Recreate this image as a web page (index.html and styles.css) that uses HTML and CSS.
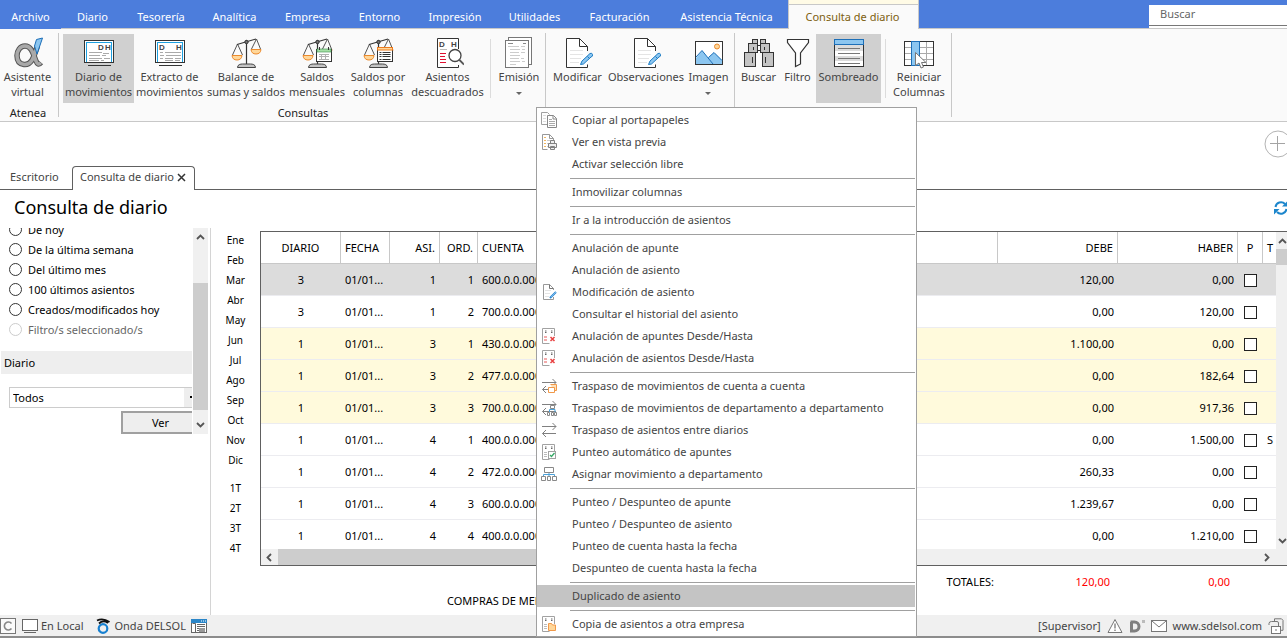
FILE: index.html
```html
<!DOCTYPE html>
<html lang="es">
<head>
<meta charset="utf-8">
<meta name="viewport" content="width=device-width, initial-scale=1">
<title>Consulta de diario</title>
<link rel="stylesheet" href="styles.css">
</head>
<body>
<svg class="sprite" aria-hidden="true">
  <symbol id="i-scale" viewBox="0 0 32 32">
    <g fill="none" stroke="#555" stroke-width="1">
      <path d="M7.5 7 2.500 18M7.500 7l5 11M26.500 2l-5 10M26.500 2l4 10"/>
    </g>
    <path d="M7 7.500 26 2" stroke="#333" stroke-width="1.200" fill="none"/>
    <path d="M16.500 3v24" stroke="#333" stroke-width="1.200"/>
    <circle cx="16.500" cy="5" r="1.700" fill="#777" stroke="#333"/>
    <path d="M2 18.500h10q-.5 4.500-5 4.500t-5-4.500z" fill="#ffd79a" stroke="#ec8a2c"/>
    <path d="M21 12.500h10q-.5 4.500-5 4.500t-5-4.500z" fill="#ffd79a" stroke="#ec8a2c"/>
    <path d="M7.500 30.500c0-3 3-3.500 5-3.500h8c2 0 5 .5 5 3.500z" fill="#c4c4c4" stroke="#444"/>
  </symbol>
  <symbol id="i-page" viewBox="0 0 32 32">
    <path d="M4.500 1.500h14l7 7V30.500h-21z" fill="#fff" stroke="none"/>
    <path d="M25.500 14V9.500l-8-8h-13v29h21v-3" fill="none" stroke="#333"/>
    <path d="M17.500 1.500v8h8" fill="none" stroke="#333"/>
    <path d="M8 13.500h13M8 17.500h13M8 21.500h11M8 25.500h9" stroke="#e4e4e4"/>
    <path d="M18.500 27.500l1.500-3.500 8-7.500q2-1 2.500 1t-1.500 2.500l-7.500 7z" fill="#8cc6f0" stroke="#1c7cc4"/>
    <path d="M25.500 19.500l2 2" stroke="#1c7cc4"/>
  </symbol>
  <symbol id="m-sheet" viewBox="0 0 16 16">
    <path d="M13.500 8V.5h-12v15h7" fill="#fff" stroke="#a2a2a2"/>
    <path d="M4 3h1.500M4 4.500h1.500M10 3h1.500M10 4.500h1.500" stroke="#666"/>
  </symbol>
  <symbol id="m-swap" viewBox="0 0 16 16">
    <path d="M1 4.500h14M11.500 1l3.500 3.500-3.500 3.500M15 11.500H1.500M5 8l-3.500 3.500L5 15" fill="none" stroke="#808080"/>
  </symbol>
</svg>

<header>
  <nav class="topbar" aria-label="Menú principal">
    <div class="tabs">
      <a class="tab tab-file" href="#">Archivo</a>
      <a class="tab" href="#">Diario</a>
      <a class="tab" href="#">Tesorería</a>
      <a class="tab" href="#">Analítica</a>
      <a class="tab" href="#">Empresa</a>
      <a class="tab" href="#">Entorno</a>
      <a class="tab" href="#">Impresión</a>
      <a class="tab" href="#">Utilidades</a>
      <a class="tab" href="#">Facturación</a>
      <a class="tab" href="#">Asistencia Técnica</a>
      <a class="tab tab-active" href="#" aria-current="page">Consulta de diario</a>
    </div>
    <div class="search"><input type="text" placeholder="Buscar" aria-label="Buscar"></div>
  </nav>

  <div class="ribbon">
    <section class="group g-atenea">
      <div class="tools">
        <button class="tool w58" type="button">
          <svg class="ico" viewBox="0 0 32 32"><path d="M25.500 9C22 19 20 28.500 12 27.500c-5-.6-7-4.500-7-9s3-9.500 8-9.500c7 0 8.500 9 11 15 1 3 3 4 5 1.500" fill="none" stroke="#555" stroke-width="5.500"/><path d="M25.500 9C22 19 20 28.500 12 27.500c-5-.6-7-4.500-7-9s3-9.500 8-9.500c7 0 8.500 9 11 15 1 3 3 4 4.600 1.800" fill="none" stroke="#a9a9a9" stroke-width="3.500"/><path d="M24.500 2.500 30.500 1l-5.500 16-2.500-8z" fill="#8cc6f0" stroke="#1d6fb8"/></svg>
          <span>Asistente<br>virtual</span>
        </button>
      </div>
      <h2>Atenea</h2>
    </section>

    <section class="group g-consultas">
      <div class="tools">
        <button class="tool w71 is-on" type="button">
          <svg class="ico" viewBox="0 0 32 32" shape-rendering="crispEdges"><rect x="1.500" y="3.500" width="29" height="22" fill="#fff" stroke="#333"/><path d="M3.500 25V5.500h25V25" fill="none" stroke="#1ea0e0"/><path d="M5 28.500h23" stroke="#333"/><path d="M6 15.500h13M6 18.500h11M6 21.500h13M6 23.500h10M20 16.500h6M19 18.500h4M21 21.500h6M18 23.500h3" stroke="#aaa"/><text class="icon-text" x="15" y="13">D</text><text class="icon-text" x="22" y="13">H</text></svg>
          <span>Diario de<br>movimientos</span>
        </button>
        <button class="tool w71" type="button">
          <svg class="ico" viewBox="0 0 32 32" shape-rendering="crispEdges"><rect x="1.500" y="3.500" width="29" height="22" fill="#fff" stroke="#333"/><path d="M3.500 25V5.500h25V25" fill="none" stroke="#1ea0e0"/><path d="M5 28.500h23" stroke="#333"/><path d="M6 15.500h3M11 15.500h16M6 18.500h4M12 18.500h15M6 21.500h3M11 21.500h8M21 21.500h6M11 23.500h8M21 23.500h5" stroke="#aaa"/><text class="icon-text" x="5" y="13">D</text><text class="icon-text" x="22" y="13">H</text></svg>
          <span>Extracto de<br>movimientos</span>
        </button>
        <button class="tool w82" type="button">
          <svg class="ico"><use href="#i-scale"/></svg>
          <span>Balance de<br>sumas y saldos</span>
        </button>
        <button class="tool w60" type="button">
          <svg class="ico" viewBox="0 0 32 32"><use href="#i-scale" width="32" height="32"/><rect x="15.500" y="12.500" width="15" height="12" fill="#fff" stroke="#333"/><rect x="16" y="12" width="14" height="3" fill="#a5e0a5" stroke="#3a8a4a" stroke-width=".6"/><path d="M18.500 10v3M27.500 10v3" stroke="#333"/><path d="M18 17.500h10M18 19.500h10M18 22.500h10M20.500 17v6M24.500 17v6" stroke="#b0b0b0"/></svg>
          <span>Saldos<br>mensuales</span>
        </button>
        <button class="tool w62" type="button">
          <svg class="ico" viewBox="0 0 32 32"><use href="#i-scale" width="32" height="32"/><rect x="15.500" y="10.500" width="15" height="14" fill="#fff" stroke="#333"/><rect x="15.500" y="10.500" width="15" height="2.500" fill="#ffd79a" stroke="#ec7a1c"/><path d="M17.500 15.500h2M20.500 15.500h8M17.500 17.500h2M20.500 17.500h8M17.500 19.500h2M20.500 19.500h8M17.500 22.500h2M20.500 22.500h8" stroke="#333"/></svg>
          <span>Saldos por<br>columnas</span>
        </button>
        <button class="tool w77" type="button">
          <svg class="ico" viewBox="0 0 32 32"><path d="M26.500 12V1.500h-21v29h21V28" fill="#fff" stroke="#333"/><text class="icon-text" x="7" y="10">D</text><text class="icon-text" x="19" y="10">H</text><path d="M8 12.500h7" stroke="#bbb"/><path d="M8 16.500h6M8 19.500h5M8 22.500h6M8 25.500h6" stroke="#e01030"/><circle cx="23" cy="18.500" r="6" fill="#fff" stroke="#444" stroke-width="1.300"/><path d="M27 22.500l5 5" stroke="#555" stroke-width="1.800"/></svg>
          <span>Asientos<br>descuadrados</span>
        </button>
        <div class="tool-sep"></div>
        <button class="tool w48" type="button">
          <svg class="ico" viewBox="0 0 32 32" shape-rendering="crispEdges"><path d="M5.500 3V.5h23v27H26" fill="#fff" stroke="#777"/><rect x="2.500" y="3.500" width="23" height="27" fill="#fff" stroke="#777"/><path d="M5 6.500h5M20 6.500h3" stroke="#888"/><path d="M5 9.500h11M18 9.500h4M7 12.500h10M19 12.500h3M7 15.500h9M18 15.500h4M7 18.500h10M7 21.500h9M18 21.500h3M7 24.500h10M19 24.500h3M7 27.500h6" stroke="#ccc"/></svg>
          <span>Emisión<br><i class="caret"></i></span>
        </button>
      </div>
      <h2>Consultas</h2>
    </section>

    <section class="group g-edit">
      <div class="tools">
        <button class="tool w57" type="button"><svg class="ico"><use href="#i-page"/></svg><span>Modificar</span></button>
        <button class="tool w80" type="button"><svg class="ico"><use href="#i-page"/></svg><span>Observaciones</span></button>
        <button class="tool w45" type="button">
          <svg class="ico" viewBox="0 0 32 32"><rect x="2.500" y="4.500" width="27" height="23" fill="#fff" stroke="#333"/><path d="M3 21l6-7.500 11 13.500H3zM15 20.500l6-5 8 7.500v4H20z" fill="#8cc6f0"/><path d="M3 20l6-6.500L20 27M15.500 20.500l5.500-5 8 8" fill="none" stroke="#1d6fb8"/><circle cx="24" cy="9.500" r="2.500" fill="#ffd79a" stroke="#ec8a2c"/></svg>
          <span>Imagen<br><i class="caret"></i></span>
        </button>
      </div>
    </section>

    <section class="group g-view">
      <div class="tools">
        <button class="tool w41" type="button">
          <svg class="ico" viewBox="0 0 32 32" shape-rendering="crispEdges"><g fill="#c4c4c4" stroke="#333"><rect x="9.500" y="2.500" width="5" height="4"/><rect x="17.500" y="2.500" width="5" height="4"/><rect x="13.500" y="8.500" width="5" height="5" fill="#fff"/><rect x="5.500" y="6.500" width="9" height="9"/><rect x="17.500" y="6.500" width="9" height="9"/><rect x="1.500" y="15.500" width="11" height="14"/><rect x="19.500" y="15.500" width="11" height="14"/><path d="M10.500 10v3M21.500 10v3M9.500 20v6M22.500 20v6"/></g></svg>
          <span>Buscar</span>
        </button>
        <button class="tool w37" type="button">
          <svg class="ico" viewBox="0 0 32 32"><path d="M5.500 2.500h21v3l-8 10.500v11l-5 2.500V16l-8-10.500z" fill="#fff" stroke="#333" stroke-width="1.200"/></svg>
          <span>Filtro</span>
        </button>
        <button class="tool w65 is-on" type="button">
          <svg class="ico" viewBox="0 0 32 32" shape-rendering="crispEdges"><rect x="1.500" y="2.500" width="29" height="27" fill="#fff" stroke="#333"/><path d="M2 8h28v6H2zM2 19h28v5H2z" fill="#dcdcdc"/><rect x="1.500" y="2.500" width="29" height="5" fill="#8cc6f0" stroke="#1d6fb8"/><path d="M5 11.500h22M5 16.500h22M5 21.500h22M5 26.500h22" stroke="#777"/></svg>
          <span>Sombreado</span>
        </button>
        <div class="tool-sep"></div>
        <button class="tool w58" type="button">
          <svg class="ico" viewBox="0 0 32 32"><g shape-rendering="crispEdges"><rect x="1.500" y="4.500" width="29" height="24" fill="#fff" stroke="#333"/><path d="M2 10.500h28M2 16.500h28M2 22.500h28M23.500 5v23" stroke="#aaa"/><rect x="8.500" y="4.500" width="8" height="24" fill="#8cc6f0" stroke="#1d6fb8"/></g><path d="M12.500 15.500v13l3.500-2.500 2 5 2.500-1-2-4.500h4.500z" fill="#fff" stroke="#777"/></svg>
          <span>Reiniciar<br>Columnas</span>
        </button>
      </div>
    </section>
  </div>
</header>

<div class="doc-tools">
  <button class="add" type="button" aria-label="Añadir"><svg viewBox="0 0 28 28"><circle cx="14" cy="14" r="13" fill="none" stroke="#b4b4b4"/><path d="M6 13.500h15M13.500 6v15" stroke="#a4a4a4"/></svg></button>
</div>

<nav class="doc-tabs" aria-label="Documentos">
  <a class="doc-tab" href="#">Escritorio</a>
  <div class="doc-tab doc-tab-active"><a href="#">Consulta de diario</a><button type="button" aria-label="Cerrar"><svg viewBox="0 0 9 9"><path d="M1 1l7 7M8 1L1 8" stroke="#333" stroke-width="1.500"/></svg></button></div>
  <div class="doc-line"></div>
</nav>

<div class="heading">
  <h1>Consulta de diario</h1>
  <button class="refresh" type="button" aria-label="Actualizar"><svg viewBox="0 0 14 14"><path d="M1.500 6A5.500 5.500 0 0 1 11 3M12.500 8A5.500 5.500 0 0 1 3 11" fill="none" stroke="#1c86cc" stroke-width="2"/><path d="M13 .5v5H8zM0 13.500v-5.500h5.500z" fill="#1c86cc"/></svg></button>
</div>

<main>
  <aside class="side">
    <form class="filter">
      <div class="filter-body">
        <label class="opt"><input type="radio" name="periodo">De hoy</label>
        <label class="opt"><input type="radio" name="periodo">De la última semana</label>
        <label class="opt"><input type="radio" name="periodo">Del último mes</label>
        <label class="opt"><input type="radio" name="periodo">100 últimos asientos</label>
        <label class="opt"><input type="radio" name="periodo">Creados/modificados hoy</label>
        <label class="opt opt-off"><input type="radio" name="periodo" disabled>Filtro/s seleccionado/s</label>
        <label class="section" for="diario">Diario</label>
        <div class="combo"><select id="diario"><option>Todos</option></select><span class="combo-arrow"></span></div>
        <button class="see" type="button">Ver</button>
      </div>
      <div class="vbar">
        <svg viewBox="0 0 9 6"><path d="M1 5l3.500-3.500L8 5" fill="none" stroke="#555" stroke-width="1.800"/></svg>
        <div class="vthumb"></div>
        <svg viewBox="0 0 9 6"><path d="M1 1l3.500 3.500L8 1" fill="none" stroke="#555" stroke-width="1.800"/></svg>
      </div>
    </form>
  </aside>

  <div class="months">
    <button type="button">Ene</button><button type="button">Feb</button><button type="button">Mar</button><button type="button">Abr</button><button type="button">May</button><button type="button">Jun</button><button type="button">Jul</button><button type="button">Ago</button><button type="button">Sep</button><button type="button">Oct</button><button type="button">Nov</button><button type="button">Dic</button>
    <button class="first-term" type="button">1T</button><button type="button">2T</button><button type="button">3T</button><button type="button">4T</button>
  </div>

  <section class="journal">
    <div class="grid">
      <div class="grid-view">
        <table>
          <colgroup><col class="c-diario"><col class="c-fecha"><col class="c-asi"><col class="c-ord"><col><col class="c-importe"><col class="c-importe"><col class="c-p"><col class="c-t"></colgroup>
          <thead><tr><th class="mid">DIARIO</th><th>FECHA</th><th class="num">ASI.</th><th class="num">ORD.</th><th>CUENTA</th><th class="num">DEBE</th><th class="num">HABER</th><th class="mid">P</th><th class="last">T</th></tr></thead>
          <tbody>
            <tr class="sel"><td class="mid">3</td><td>01/01...</td><td class="num">1</td><td class="num">1</td><td>600.0.0.00000</td><td class="num">120,00</td><td class="num">0,00</td><td class="mid"><input type="checkbox" aria-label="Punteado"></td><td></td></tr>
            <tr><td class="mid">3</td><td>01/01...</td><td class="num">1</td><td class="num">2</td><td>700.0.0.00000</td><td class="num">0,00</td><td class="num">120,00</td><td class="mid"><input type="checkbox" aria-label="Punteado"></td><td></td></tr>
            <tr class="alt"><td class="mid">1</td><td>01/01...</td><td class="num">3</td><td class="num">1</td><td>430.0.0.00000</td><td class="num">1.100,00</td><td class="num">0,00</td><td class="mid"><input type="checkbox" aria-label="Punteado"></td><td></td></tr>
            <tr class="alt"><td class="mid">1</td><td>01/01...</td><td class="num">3</td><td class="num">2</td><td>477.0.0.00000</td><td class="num">0,00</td><td class="num">182,64</td><td class="mid"><input type="checkbox" aria-label="Punteado"></td><td></td></tr>
            <tr class="alt"><td class="mid">1</td><td>01/01...</td><td class="num">3</td><td class="num">3</td><td>700.0.0.00000</td><td class="num">0,00</td><td class="num">917,36</td><td class="mid"><input type="checkbox" aria-label="Punteado"></td><td></td></tr>
            <tr><td class="mid">1</td><td>01/01...</td><td class="num">4</td><td class="num">1</td><td>400.0.0.00000</td><td class="num">0,00</td><td class="num">1.500,00</td><td class="mid"><input type="checkbox" aria-label="Punteado"></td><td>S</td></tr>
            <tr><td class="mid">1</td><td>01/01...</td><td class="num">4</td><td class="num">2</td><td>472.0.0.00000</td><td class="num">260,33</td><td class="num">0,00</td><td class="mid"><input type="checkbox" aria-label="Punteado"></td><td></td></tr>
            <tr><td class="mid">1</td><td>01/01...</td><td class="num">4</td><td class="num">3</td><td>600.0.0.00000</td><td class="num">1.239,67</td><td class="num">0,00</td><td class="mid"><input type="checkbox" aria-label="Punteado"></td><td></td></tr>
            <tr><td class="mid">1</td><td>01/01...</td><td class="num">4</td><td class="num">4</td><td>400.0.0.00000</td><td class="num">0,00</td><td class="num">1.210,00</td><td class="mid"><input type="checkbox" aria-label="Punteado"></td><td></td></tr>
          </tbody>
        </table>
      </div>
      <div class="gbar">
        <svg viewBox="0 0 9 6"><path d="M1 5l3.500-3.500L8 5" fill="none" stroke="#555" stroke-width="1.800"/></svg>
        <div class="gthumb"></div>
        <svg viewBox="0 0 9 6"><path d="M1 1l3.500 3.500L8 1" fill="none" stroke="#555" stroke-width="1.800"/></svg>
      </div>
      <div class="hbar">
        <svg viewBox="0 0 6 9"><path d="M5 1L1.500 4.500 5 8" fill="none" stroke="#555" stroke-width="1.800"/></svg>
        <div class="hthumb"></div>
        <svg viewBox="0 0 6 9"><path d="M1 1l3.500 3.500L1 8" fill="none" stroke="#555" stroke-width="1.800"/></svg>
      </div>
    </div>
    <div class="totals">
      <div class="account">COMPRAS DE MERCADERÍAS</div>
      <div class="sums"><span>TOTALES:</span><output class="debe">120,00</output><output class="haber">0,00</output></div>
    </div>
  </section>
</main>

<footer>
  <svg class="s16" viewBox="0 0 16 16"><rect x=".5" y=".5" width="15" height="15" fill="#fafafa" stroke="#777"/><path d="M11.500 5.500a4 4 0 1 0 0 5" fill="none" stroke="#888" stroke-width="1.600"/></svg>
  <svg class="s16" viewBox="0 0 16 16"><rect x=".5" y="1.500" width="15" height="11" fill="#fff" stroke="#666"/><path d="M2 14.500h12" stroke="#666"/></svg>
  <span class="local">En Local</span>
  <svg class="s16" viewBox="0 0 16 16"><circle cx="8" cy="10.500" r="4.300" fill="none" stroke="#1780d0" stroke-width="2.200"/><path d="M2 2.500Q8-.5 14.500 4M4 5.500Q8 1.500 13 5" fill="none" stroke="#111" stroke-width="1.800"/></svg>
  <span class="onda">Onda DELSOL</span>
  <svg class="s16" viewBox="0 0 16 16"><rect x=".5" y="1.500" width="15" height="13" fill="#fff" stroke="#666"/><path d="M0 1h16v4H0z" fill="#2b86c8"/><path d="M10 3h1M12 3h1M14 3h1" stroke="#fff"/><path d="M1.500 5.500h3v9M6 6.500h8M6 8.500h8M6 10.500h8M6 12.500h8" fill="none" stroke="#666"/><path d="M8 10h6v4H8z" fill="#999"/></svg>
  <div class="right">
    <span>[Supervisor]</span>
    <svg class="s16" viewBox="0 0 16 16"><path d="M8 1.500l7 13H1z" fill="#fff" stroke="#777"/><path d="M8 5.500v5M8 11.500v1.500" stroke="#777" stroke-width="1.300"/></svg>
    <svg class="s16" viewBox="0 0 16 16"><path d="M1.500 4h4a4.500 4.500 0 0 1 0 9h-3V4" fill="none" stroke="#808080" stroke-width="3"/><path d="M13 2h3v3h-3z" fill="#bbb"/></svg>
    <svg class="s16" viewBox="0 0 16 16"><rect x=".5" y="2.500" width="15" height="11" fill="#fff" stroke="#777"/><path d="M1 3l7 6 7-6" fill="none" stroke="#777"/></svg>
    <a href="#">www.sdelsol.com</a>
    <svg class="s16" viewBox="0 0 16 16"><path d="M6.500 3V.8h7l1.500 1.500v10h-2" fill="none" stroke="#777"/><path d="M1 7V5.500Q1 3.500 3.500 3.500H9q1.500 0 1.500 1.500v3" fill="none" stroke="#777"/><rect x="3.500" y="8.500" width="9" height="7" fill="#fff" stroke="#777"/><path d="M8 11v2" stroke="#777"/></svg>
  </div>
</footer>

<div class="menu" role="menu">
  <button type="button" role="menuitem"><svg viewBox="0 0 16 16"><path d="M7 12.500H.5V.5h6l2 2" fill="#fff" stroke="#a0a0a0"/><path d="M2 3.500h3M2 6.500h3M2 9.500h3" stroke="#ddd"/><path d="M6.500 3.500h6l3 3v9h-9z" fill="#fff" stroke="#888"/><path d="M12 3.500V7h3.500" fill="none" stroke="#888"/><path d="M8 7.500h3M8 9.500h6M8 11.500h6M8 13.500h6" stroke="#aaa"/></svg><span>Copiar al portapapeles</span></button>
  <button type="button" role="menuitem"><svg viewBox="0 0 16 16"><path d="M12.500 7V4.500l-4-4h-7v15h5" fill="#fff" stroke="#999"/><path d="M8.500.5v4h4" fill="none" stroke="#999"/><path d="M3 3.500h2M3 6.500h2M3 9.500h2M3 12.500h2" stroke="#f0b860"/><path d="M6 6.500h4M6 9.500h2M6 12.500h1" stroke="#ccc"/><path d="M9.500 9V6.500h4V9M7.500 9.500h8v4h-8zM9.500 12.500h4v3h-4z" fill="#eee" stroke="#808080"/></svg><span>Ver en vista previa</span></button>
  <button type="button" role="menuitem"><i></i><span>Activar selección libre</span></button>
  <hr>
  <button type="button" role="menuitem"><i></i><span>Inmovilizar columnas</span></button>
  <hr>
  <button type="button" role="menuitem"><i></i><span>Ir a la introducción de asientos</span></button>
  <hr>
  <button type="button" role="menuitem"><i></i><span>Anulación de apunte</span></button>
  <button type="button" role="menuitem"><i></i><span>Anulación de asiento</span></button>
  <button type="button" role="menuitem"><svg viewBox="0 0 16 16"><path d="M12.500 6V4.500l-4-4h-6v15h10V13" fill="#fff" stroke="#999"/><path d="M8.500.5v4h4" fill="none" stroke="#777"/><path d="M4 6.500h6M4 9.500h5M4 12.500h4" stroke="#e4e4e4"/><path d="M9 14l6-6" stroke="#2b86d0" stroke-width="2"/><path d="M10 13l5-5" stroke="#8cc6f0" stroke-width=".8"/></svg><span>Modificación de asiento</span></button>
  <button type="button" role="menuitem"><i></i><span>Consultar el historial del asiento</span></button>
  <button type="button" role="menuitem"><svg viewBox="0 0 16 16"><use href="#m-sheet" width="16" height="16"/><path d="M3 9h3M3 12h3" stroke="#f09090" stroke-width="1.500"/><path d="M9.500 9l4 4M13.500 9l-4 4" stroke="#e84040" stroke-width="1.500"/></svg><span>Anulación de apuntes Desde/Hasta</span></button>
  <button type="button" role="menuitem"><svg viewBox="0 0 16 16"><use href="#m-sheet" width="16" height="16"/><path d="M3 9h3M3 12h3" stroke="#f09090" stroke-width="1.500"/><path d="M9.500 9l4 4M13.500 9l-4 4" stroke="#e84040" stroke-width="1.500"/></svg><span>Anulación de asientos Desde/Hasta</span></button>
  <hr>
  <button type="button" role="menuitem"><svg viewBox="0 0 16 16"><use href="#m-swap" width="16" height="16"/><path d="M9.500 6.500h6v6h-3" fill="#ffe0b8" stroke="#f0994a"/><path d="M7.500 9.500h6v5h-6z" fill="#fff" stroke="#f0994a"/></svg><span>Traspaso de movimientos de cuenta a cuenta</span></button>
  <button type="button" role="menuitem"><svg viewBox="0 0 16 16"><use href="#m-swap" width="16" height="16"/><path d="M8.500 12v-2.500h5.500V12M11.500 8v2" fill="none" stroke="#4ba0d8"/><path d="M9.500 5.500h4v3h-4zM6.500 12.500h2v3h-2zM10.500 12.500h2v3h-2zM13.500 12.500h2v3h-2z" fill="#fff" stroke="#888"/></svg><span>Traspaso de movimientos de departamento a departamento</span></button>
  <button type="button" role="menuitem"><svg><use href="#m-swap"/></svg><span>Traspaso de asientos entre diarios</span></button>
  <button type="button" role="menuitem"><svg viewBox="0 0 16 16"><use href="#m-sheet" width="16" height="16"/><path d="M3 8.500h3M3 10.500h3M3 12.500h3" stroke="#bbb"/><rect x="7.500" y="7.500" width="7" height="7" fill="#fff" stroke="#a2a2a2"/><path d="M9 11l1.500 1.500L13.500 9" fill="none" stroke="#35a865" stroke-width="1.300"/></svg><span>Punteo automático de apuntes</span></button>
  <button type="button" role="menuitem"><svg viewBox="0 0 16 16"><path d="M8 6v4M2.500 10V8.500h11V10" fill="none" stroke="#4ba0d8"/><path d="M3.500 1.500h9v5h-9zM.5 10.500h4v4h-4zM6.500 10.500h3v4h-3zM11.500 10.500h4v4h-4z" fill="#fff" stroke="#888"/></svg><span>Asignar movimiento a departamento</span></button>
  <hr>
  <button type="button" role="menuitem"><i></i><span>Punteo / Despunteo de apunte</span></button>
  <button type="button" role="menuitem"><i></i><span>Punteo / Despunteo de asiento</span></button>
  <button type="button" role="menuitem"><i></i><span>Punteo de cuenta hasta la fecha</span></button>
  <button type="button" role="menuitem"><i></i><span>Despunteo de cuenta hasta la fecha</span></button>
  <hr>
  <button class="is-hover" type="button" role="menuitem"><i></i><span>Duplicado de asiento</span></button>
  <hr>
  <button type="button" role="menuitem"><svg viewBox="0 0 16 16"><use href="#m-sheet" width="16" height="16"/><path d="M3 8.500h3M3 10.500h3M3 12.500h3" stroke="#bbb"/><path d="M7.500 14.500v-7h3l1 1.500h3v5.500z" fill="#ffd79a" stroke="#f0994a"/></svg><span>Copia de asientos a otra empresa</span></button>
</div>
</body>
</html>
```
FILE: styles.css
```css
* { box-sizing: border-box; }

body {
  margin: 0;
  height: 100vh;
  display: flex;
  flex-direction: column;
  overflow: hidden;
  background: #fff;
  color: #000;
  font: 11px/16px "Noto Sans", "Open Sans", sans-serif;
}

button, input, select { font: inherit; color: inherit; }
button { margin: 0; padding: 0; border: 0; background: none; }
a { color: inherit; text-decoration: none; }
svg { display: block; flex: none; }
.sprite { display: none; }
header, .doc-tools, .doc-tabs, .heading, footer { flex: none; }

/* Top bar */
.topbar {
  display: flex;
  justify-content: space-between;
  height: 28px;
  background: #4c7ddc;
  color: #fff;
}
.tabs {
  display: grid;
  grid-template-columns: 61px 63px 74px 73px 73px 71px 80px 79px 91px 123px 131px;
}
.tab { padding-top: 9px; text-align: center; white-space: nowrap; }
.tab-file, .tab-active { position: relative; z-index: 1; height: 29px; }
.tab-file { background: #4c7ddc; }
.tab-active {
  padding: 4px 2px 0 0;
  border: 1px solid #c8c8c8;
  border-top: 0;
  border-bottom: 0;
  background: linear-gradient(#fffbe6 4px, #c8c8c8 4px, #c8c8c8 5px, #fafafa 5px);
  padding-top: 9px;
  color: #7d6010;
}
.search { display: flex; width: 138px; margin-top: 5px; background: #fff; padding-bottom: 2px; }
.search input {
  width: 100%;
  padding: 0 11px 2px;
  border: 0;
  border-bottom: 1px solid #777;
  outline: 0;
  background: #fff;
}
.search input::placeholder { color: #666; opacity: 1; }

/* Ribbon */
.ribbon {
  display: flex;
  height: 94px;
  padding: 4px 0;
  border-top: 1px solid #c8c8c8;
  border-bottom: 1px solid #c8c8c8;
  background: #fafafa;
  color: #444;
}
.group { border-right: 1px solid #c8c8c8; padding-top: 1px; }
.g-consultas { padding-left: 4px; padding-right: 2px; }
.g-edit, .g-view { padding-left: 3px; padding-right: 3px; }
.group h2 { margin: 2px 0 0; color: #222; font-size: 11px; line-height: 16px; font-weight: 400; text-align: center; }
.tools { display: flex; }
.tool {
  display: flex;
  flex-direction: column;
  align-items: center;
  height: 69px;
  padding-top: 3px;
  line-height: 15px;
  text-align: center;
  white-space: nowrap;
}
.tool.is-on { background: #d0d0d0; }
.ico { width: 32px; height: 32px; }
.icon-text { font: 700 8px "Liberation Sans", sans-serif; fill: #444; }
.caret {
  display: inline-block;
  border: 3px solid transparent;
  border-top: 3px solid #666;
  border-bottom: 0;
  vertical-align: middle;
}
.tool-sep { width: 1px; height: 59px; margin: 5px 4px 0; background: #dcdcdc; }
.w37 { width: 37px; }
.w41 { width: 41px; }
.w45 { width: 45px; }
.w48 { width: 48px; }
.w57 { width: 57px; }
.w58 { width: 58px; }
.w60 { width: 60px; }
.w62 { width: 62px; }
.w65 { width: 65px; }
.w71 { width: 71px; }
.w77 { width: 77px; }
.w80 { width: 80px; }
.w82 { width: 82px; }
.g-atenea .tool { padding-right: 3px; }
.g-atenea h2 { padding-right: 2px; }

/* Document tabs */
.doc-tools { display: flex; justify-content: flex-end; height: 44px; padding-top: 8px; }
.add { width: 23px; height: 28px; }
.add svg { width: 28px; height: 28px; }
.doc-tabs { display: flex; height: 24px; color: #444; }
.doc-tab { width: 72px; padding: 3px 0 0 10px; border-bottom: 1px solid #606060; }
.doc-tab-active {
  display: flex;
  align-items: flex-start;
  gap: 3px;
  width: 123px;
  padding: 2px 0 0 7px;
  border: 1px solid #606060;
  border-bottom: 0;
  border-radius: 4px 4px 0 0;
  white-space: nowrap;
}
.doc-tab-active button { padding-top: 4px; }
.doc-tab-active svg { width: 9px; height: 9px; }
.doc-line { flex: 1; border-bottom: 1px solid #606060; }

.heading { display: flex; justify-content: space-between; height: 38px; padding: 5px 0 0 14px; }
.heading h1 { margin: 0; font-size: 18px; line-height: 24px; font-weight: 400; }
.refresh { width: 13px; height: 26px; }
.refresh svg { width: 14px; height: 14px; }

/* Filter panel */
main { flex: 1; display: flex; min-height: 0; }
.side { width: 211px; border-right: 1px solid #d4d4d4; }
.filter { display: flex; height: 206px; }
.filter-body {
  display: flex;
  flex-direction: column;
  justify-content: flex-end;
  width: 192px;
  overflow: hidden;
}
.filter-body > * { flex: none; }
.opt { display: flex; align-items: center; gap: 6px; height: 20px; padding-left: 9px; white-space: nowrap; }
.opt input {
  appearance: none;
  width: 13px;
  height: 13px;
  margin: 0 0 1px;
  border: 1px solid #333;
  border-radius: 50%;
  background: #fff;
}
.opt-off { color: #666; }
.opt-off input { border-color: #ccc; }
.section { margin: 11px 0 13px 1px; padding: 4px 3px 3px; background: #eee; }
.combo { display: flex; align-items: center; width: 192px; height: 21px; margin-left: 9px; border: 1px solid #ccc; }
.combo select { appearance: none; width: 174px; height: 19px; padding: 0 3px; border: 0; background: #fff; }
.combo-arrow { flex: 1; height: 19px; background: linear-gradient(#000, #000) 6px 8px / 3px 2px no-repeat #eee; }
.see { width: 79px; height: 23px; margin: 3px 0 0 121px; border: 2px solid #a0a0a0; background: #eee; }
.vbar {
  display: flex;
  flex-direction: column;
  align-items: center;
  width: 15px;
  margin-left: 1px;
  padding: 6px 0;
  background: #f0f0f0;
}
.vbar svg, .gbar svg { width: 9px; height: 6px; }
.vthumb { flex: 1; width: 15px; margin: 43px 0 12px; background: #cdcdcd; }

/* Months */
.months { display: flex; flex-direction: column; width: 49px; padding-top: 2px; }
.months button { height: 20px; font-size: 10px; line-height: 20px; }
.months .first-term { margin-top: 8px; }

/* Journal */
.journal { flex: 1; display: flex; flex-direction: column; min-width: 0; padding-top: 3px; }
.grid {
  flex: 1;
  display: grid;
  grid-template-columns: minmax(0, 1fr) 11px;
  grid-template-rows: minmax(0, 1fr) 16px;
  min-height: 0;
  border: 1px solid #606060;
  border-right: 0;
}
.grid-view { overflow: hidden; }
table { width: 100%; table-layout: fixed; border-collapse: separate; border-spacing: 0; }
.c-diario { width: 80px; }
.c-fecha { width: 49px; }
.c-asi { width: 50px; }
.c-ord { width: 38px; }
.c-importe { width: 120px; }
.c-p { width: 25px; }
.c-t { width: 13px; }
th, td { height: 32px; padding: 0 4px; text-align: left; font-weight: 400; white-space: nowrap; }
th { border-right: 1px solid #c8c8c8; border-bottom: 1px solid #c8c8c8; }
th.last { border-right: 0; }
td { border-bottom: 1px solid #ececf0; }
.num { text-align: right; }
.mid { text-align: center; }
.sel td { background: #dcdcdc; }
.alt td { background: #fffadc; }
td input {
  appearance: none;
  display: inline-block;
  width: 13px;
  height: 13px;
  margin: 0;
  border: 1px solid #222;
  background: #fff;
  vertical-align: middle;
}
.gbar { display: flex; flex-direction: column; justify-content: space-between; padding: 6px 0 5px 2px; background: #f0f0f0; overflow: hidden; }
.gthumb { width: 20px; height: 16px; margin: 5px 0 auto -2px; background: #cdcdcd; }
.hbar { grid-column: 1 / 3; display: flex; align-items: center; padding: 0 17px 0 5px; background: #f0f0f0; }
.hbar svg { width: 6px; height: 9px; }
.hthumb { width: 60%; height: 16px; margin: 0 auto 0 6px; background: #cdcdcd; }

.totals { display: flex; flex: none; justify-content: space-between; height: 49px; padding: 8px 0 0 187px; }
.account { margin-top: 19px; }
.sums { display: flex; padding-right: 57px; }
.sums output { color: #f00; text-align: right; }
.sums .debe { width: 116px; }
.sums .haber { width: 120px; }

/* Status bar */
footer {
  display: flex;
  align-items: center;
  gap: 6px;
  height: 23px;
  border-bottom: 2px solid #8c8c8c;
  background: #f0f0f0;
  color: #444;
}
.s16 { width: 16px; height: 16px; }
.local { margin-left: -3px; margin-right: 6px; }
.onda { margin-left: -3px; margin-right: -1px; }
.right { display: flex; align-items: center; gap: 6px; margin-left: auto; padding-right: 3px; }

/* Context menu */
.menu {
  position: absolute;
  left: 536px;
  top: 107px;
  width: 381px;
  padding: 1px 1px 1px 0;
  border: 1px solid #a0a0a0;
  background: #fff;
  color: #444;
}
.menu button {
  display: grid;
  grid-template-columns: 16px 1fr;
  align-items: center;
  gap: 15px;
  width: 100%;
  height: 22px;
  padding-left: 4px;
  text-align: left;
  white-space: nowrap;
}
.menu svg { width: 16px; height: 16px; }
.menu hr { height: 1px; margin: 3px 0 2px 33px; border: 0; background: #a0a0a0; }
.menu .is-hover { background: #c4c4c4; }
```
